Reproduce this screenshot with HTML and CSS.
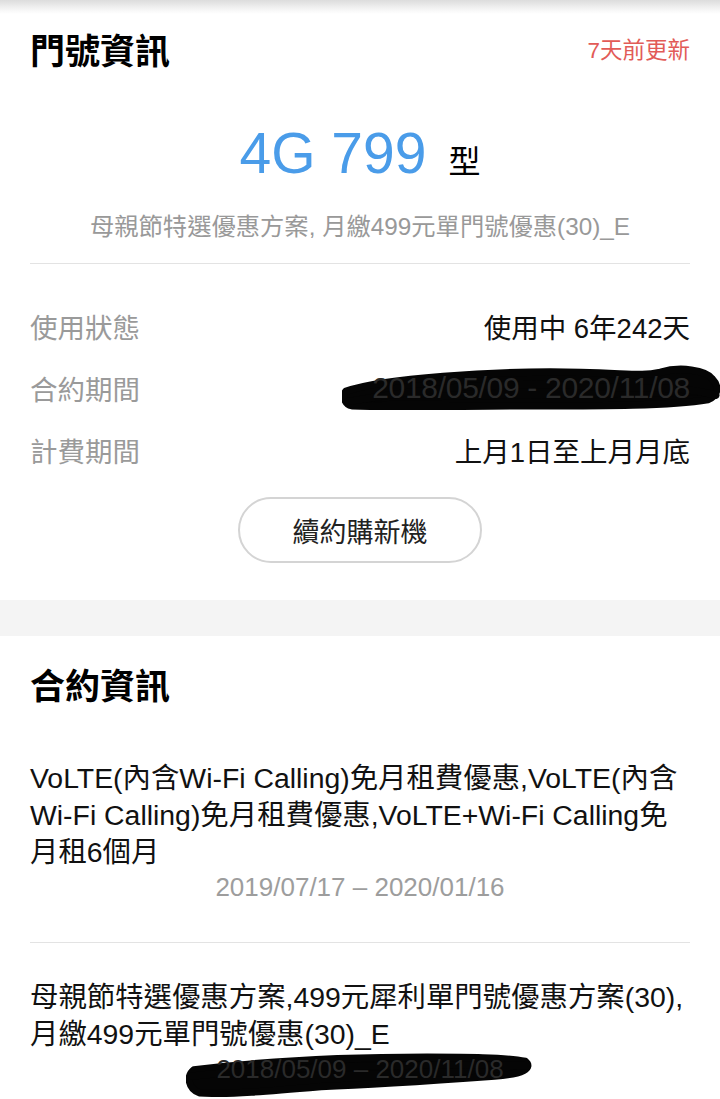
FILE: index.html
```html
<!DOCTYPE html>
<html lang="zh-Hant">
<head>
    <meta charset="UTF-8">
    <meta name="viewport" content="width=device-width, initial-scale=1.0">
    <title>門號資訊</title>
    <link rel="stylesheet" href="styles.css">
</head>
<body>
    <div class="top-shade"></div>

    <section class="card">
        <div class="card-head">
            <h2 class="card-title">門號資訊</h2>
            <span class="updated">7天前更新</span>
        </div>

        <div class="plan">
            <span class="plan-name">4G 799</span>
            <span class="plan-unit">型</span>
        </div>
        <p class="plan-desc">母親節特選優惠方案, 月繳499元單門號優惠(30)_E</p>

        <div class="rows">
            <div class="row">
                <span class="row-label">使用狀態</span>
                <span class="row-value">使用中 6年242天</span>
            </div>
            <div class="row">
                <span class="row-label">合約期間</span>
                <span class="row-value redacted">
                    <!-- hand drawn marker over the date -->
                    <svg class="scribble scribble-a" viewBox="0 0 380 44" preserveAspectRatio="none">
                        <path d="M4 26 C40 14 150 6 240 8 C290 9 300 12 320 8 C340 2 366 6 372 14 C380 22 378 30 368 34 C330 40 260 40 200 40 C120 40 60 42 10 40 C2 38 0 30 4 26 Z" />
                        <path d="M6 36 C90 22 180 16 260 22 C300 24 340 20 376 30" />
                    </svg>
                    <span class="under">2018/05/09 - 2020/11/08</span>
                </span>
            </div>
            <div class="row">
                <span class="row-label">計費期間</span>
                <span class="row-value">上月1日至上月月底</span>
            </div>
        </div>

        <div class="btn-wrap">
            <button class="pill">續約購新機</button>
        </div>
    </section>

    <div class="band"></div>

    <section class="card">
        <div class="card-head contract-head">
            <h2 class="card-title">合約資訊</h2>
        </div>

        <div class="contract">
            <p class="contract-name">VoLTE(內含Wi-&#8288;Fi Calling)免月租費優惠,VoLTE(內含Wi-&#8288;Fi Calling)免月租費優惠,VoLTE+Wi-&#8288;Fi Calling免月租6個月</p>
            <p class="contract-date">2019/07/17 – 2020/01/16</p>
        </div>

        <div class="contract">
            <p class="contract-name">母親節特選優惠方案,499元犀利單門號優惠方案(30),月繳499元單門號優惠(30)_E</p>
            <p class="contract-date redacted">
                <svg class="scribble scribble-b" viewBox="0 0 360 44" preserveAspectRatio="none">
                    <path d="M8 18 C80 10 160 6 250 6 C290 6 330 6 352 10 C360 16 350 22 320 24 C260 28 200 32 140 34 C90 38 40 42 14 40 C2 36 0 24 8 18 Z" />
                    <path d="M6 24 C90 16 200 12 354 14" />
                </svg>
                <span class="under">2018/05/09 – 2020/11/08</span>
            </p>
        </div>
    </section>
</body>
</html>
```

FILE: styles.css
```css
body {
    margin: 0;
    background-color: white;
    color: #111;
    font-family: "Liberation Sans", "Noto Sans CJK TC", sans-serif;
}
p {
    margin: 0;
}
.top-shade {
    height: 14px;
    background: linear-gradient(#dcdcdc, #f6f6f6 70%, white);
}
.card {
    padding: 0 30px;
}
.card-head {
    display: flex;
    justify-content: space-between;
    align-items: center;
    height: 68px;
}
.card-title {
    margin: 0;
    font-size: 35px;
    font-weight: bold;
    color: #000;
}
.updated {
    font-size: 22.5px;
    color: #e25b57;
}
.plan {
    display: flex;
    justify-content: center;
    align-items: baseline;
    gap: 22px;
    margin-top: 36px;
    height: 70px;
    line-height: 70px;
}
.plan-name {
    font-size: 57px;
    color: #4a9ce9;
}
.plan-unit {
    font-size: 32px;
    color: #000;
}
.plan-desc {
    margin-top: 22px;
    padding-bottom: 19px;
    border-bottom: 1.5px solid #e3e3e3;
    text-align: center;
    font-size: 24.3px;
    line-height: 34px;
    color: #999;
}
.rows {
    margin-top: 31px;
}
.row {
    display: flex;
    justify-content: space-between;
    align-items: center;
    height: 62px;
    font-size: 27.5px;
}
.row-label {
    color: #9a9a9a;
}
.row-value {
    color: #111;
}
.redacted {
    position: relative;
}
.under {
    position: relative;
    color: #2a2a2a;
}
.row-value.redacted {
    font-size: 30px;
    letter-spacing: -0.3px;
}
.scribble {
    position: absolute;
    fill: #050505;
    stroke: #050505;
    stroke-width: 7;
    stroke-linecap: round;
    stroke-linejoin: round;
}
.scribble-a {
    right: -30px;
    top: -7px;
    width: 378px;
    height: 46px;
}
.btn-wrap {
    display: flex;
    justify-content: center;
    margin-top: 16px;
    padding-bottom: 37px;
}
.pill {
    width: 244px;
    height: 66px;
    border: 2px solid #d4d4d4;
    border-radius: 33px;
    background: white;
    font-family: "Liberation Sans", "Noto Sans CJK TC", sans-serif;
    font-size: 27px;
    color: #222;
}
.band {
    height: 36px;
    background-color: #f4f4f4;
}
.contract-head {
    margin-top: 13px;
}
.contract {
    padding-top: 43px;
    padding-bottom: 39px;
    border-bottom: 1.5px solid #e3e3e3;
}
.contract + .contract {
    padding-top: 36px;
    border-bottom: none;
}
.contract-name {
    font-size: 28.4px;
    line-height: 37px;
    color: #111;
}
.contract-date {
    text-align: center;
    font-size: 26px;
    line-height: 32px;
    color: #9d9d9d;
}
.contract-date.redacted {
    display: table;
    margin: 0 auto;
}
.scribble-b {
    left: -30px;
    top: -2px;
    width: calc(100% + 60px);
    height: calc(100% + 14px);
}
```
